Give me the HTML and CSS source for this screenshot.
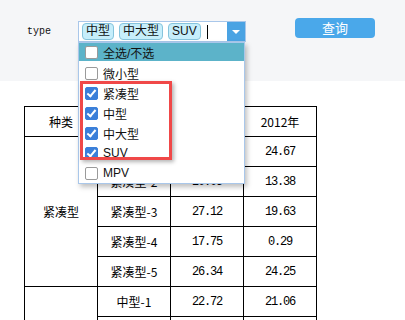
FILE: index.html
```html
<!DOCTYPE html>
<html>
<head>
<meta charset="utf-8">
<link rel="stylesheet" href="styles.css">
</head>
<body>
<div class="toolbar">
  <span class="label">type</span>
  <div class="select">
    <div class="tags">
      <span class="tag">中型</span>
      <span class="tag">中大型</span>
      <span class="tag">SUV</span>
      <span class="cursor"></span>
    </div>
    <div class="arrow"><span class="tri"></span></div>
    <ul class="dropdown">
      <li class="item active"><span class="cb"></span>全选/不选</li>
      <li class="item"><span class="cb"></span>微小型</li>
      <li class="item"><span class="cb on"></span>紧凑型</li>
      <li class="item"><span class="cb on"></span>中型</li>
      <li class="item"><span class="cb on"></span>中大型</li>
      <li class="item"><span class="cb on"></span>SUV</li>
      <li class="item"><span class="cb"></span>MPV</li>
      <li class="mark"></li>
    </ul>
  </div>
  <button class="btn">查询</button>
</div>
<table class="grid">
  <tr><td>种类</td><td>车型</td><td>2011年</td><td>2012年</td></tr>
  <tr><td rowspan="5">紧凑型</td><td>紧凑型-1</td><td class="num">23.41</td><td class="num">24.67</td></tr>
  <tr><td>紧凑型-2</td><td class="num">20.05</td><td class="num">13.38</td></tr>
  <tr><td>紧凑型-3</td><td class="num">27.12</td><td class="num">19.63</td></tr>
  <tr><td>紧凑型-4</td><td class="num">17.75</td><td class="num">0.29</td></tr>
  <tr><td>紧凑型-5</td><td class="num">26.34</td><td class="num">24.25</td></tr>
  <tr><td rowspan="5">中型</td><td>中型-1</td><td class="num">22.72</td><td class="num">21.06</td></tr>
  <tr><td>中型-2</td><td class="num">18.30</td><td class="num">15.44</td></tr>
  <tr><td>中型-3</td><td class="num">25.16</td><td class="num">11.82</td></tr>
  <tr><td>中型-4</td><td class="num">9.47</td><td class="num">20.93</td></tr>
  <tr><td>中型-5</td><td class="num">14.58</td><td class="num">26.01</td></tr>
</table>
</body>
</html>
```
FILE: styles.css
```css
html, body {
  margin: 0;
  padding: 0;
  background: #ffffff;
  font-family: "Noto Sans CJK SC", "Liberation Sans", sans-serif;
}
.toolbar {
  height: 81px;
  box-sizing: border-box;
  padding: 18px 0 0 27px;
  background: #f5f6f8;
  display: flex;
  align-items: flex-start;
}
.label {
  width: 51px;
  margin-top: 8px;
  font-family: "Liberation Mono", monospace;
  font-size: 10px;
  line-height: 12px;
  color: #111;
}
.select {
  position: relative;
  margin-top: 3px;
  width: 168px;
  height: 21px;
  box-sizing: border-box;
  border: 1px solid #a9c7ea;
  background: #fff;
  display: flex;
}
.tags {
  flex: 1;
  display: flex;
  align-items: center;
  gap: 5px;
  padding-left: 3px;
}
.tag {
  height: 15px;
  padding: 0 3px;
  border: 1px solid #86c4dc;
  border-radius: 4px;
  background: #c6eefb;
  font-family: "Liberation Sans", "Noto Sans CJK SC", sans-serif;
  font-size: 12px;
  line-height: 15px;
  color: #111;
}
.cursor {
  width: 1px;
  height: 14px;
  background: #000;
  margin-left: 1px;
}
.arrow {
  width: 18px;
  background: #4aa3e3;
  display: flex;
  align-items: center;
  justify-content: center;
}
.tri {
  width: 0;
  height: 0;
  border-left: 4px solid transparent;
  border-right: 4px solid transparent;
  border-top: 4px solid #fff;
}
.dropdown {
  position: absolute;
  top: 20px;
  left: -1px;
  width: 167px;
  box-sizing: border-box;
  margin: 0;
  padding: 0;
  list-style: none;
  background: #fff;
  border: 1px solid #a9c7ea;
  box-shadow: 2px 3px 5px rgba(0, 0, 0, 0.25);
}
.item {
  height: 20px;
  display: flex;
  align-items: center;
  padding-left: 6px;
  font-size: 12px;
  color: #111;
  font-family: "Liberation Sans", "Noto Sans CJK SC", sans-serif;
}
.item.active {
  background: #5cb3c9;
  height: 18px;
  margin-bottom: 2px;
}
.cb {
  width: 13px;
  height: 13px;
  box-sizing: border-box;
  border: 1px solid #9a9a9a;
  border-radius: 2px;
  background: #fff;
  margin-right: 5px;
  position: relative;
}
.cb.on {
  background: #3b7fd9;
  border-color: #3b7fd9;
}
.cb.on::after {
  content: "";
  position: absolute;
  left: 3px;
  top: 0px;
  width: 3px;
  height: 7px;
  border-right: 2px solid #fff;
  border-bottom: 2px solid #fff;
  transform: rotate(40deg);
}
.mark {
  position: absolute;
  left: 1px;
  top: 38px;
  width: 92px;
  height: 79px;
  box-sizing: border-box;
  border: 3px solid #f04848;
  box-shadow: 2px 2px 4px rgba(0, 0, 0, 0.3);
}
.btn {
  margin-left: 49px;
  width: 80px;
  height: 20px;
  border: none;
  border-radius: 4px;
  background: #4aa8ea;
  color: #fff;
  font-family: "Noto Sans CJK SC", sans-serif;
  font-size: 13px;
  line-height: 20px;
  padding: 0;
}
.grid {
  margin: 25px 0 0 24px;
  border-collapse: collapse;
  table-layout: fixed;
  width: 289px;
}
.grid td {
  width: 72px;
  height: 29px;
  padding: 0;
  border: 1px solid #000;
  text-align: center;
  vertical-align: middle;
  font-family: "Noto Sans CJK SC", sans-serif;
  font-size: 12px;
  color: #000;
}
.grid td.num {
  font-family: "Liberation Mono", monospace;
  letter-spacing: -1.2px;
}
```
